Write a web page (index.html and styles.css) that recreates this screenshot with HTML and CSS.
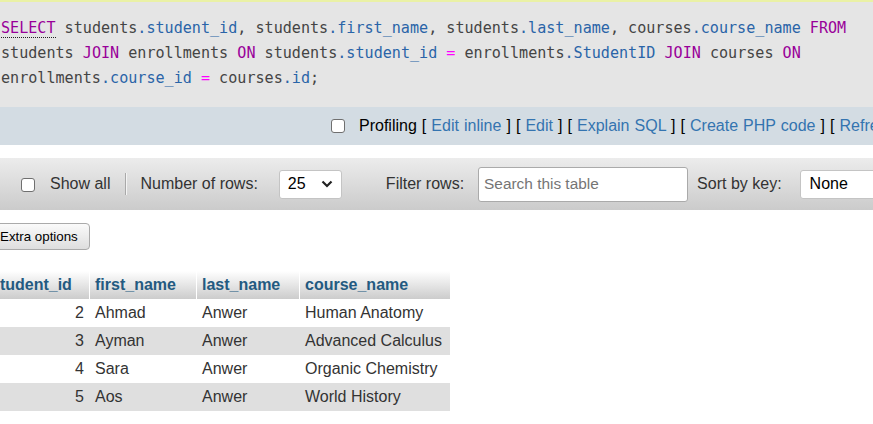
FILE: index.html
```html
<!DOCTYPE html>
<html lang="en">
<head>
<meta charset="utf-8">
<title>SQL result</title>
<link rel="stylesheet" href="styles.css">
</head>
<body>
<div class="page">
  <div class="topline"></div>
  <div class="sql"><span class="kw doc">SELECT</span> students<span class="v2">.student_id</span>, students<span class="v2">.first_name</span>, students<span class="v2">.last_name</span>, courses<span class="v2">.course_name</span> <span class="kw">FROM</span><br>students <span class="kw">JOIN</span> enrollments <span class="kw">ON</span> students<span class="v2">.student_id</span> <span class="op">=</span> enrollments<span class="v2">.StudentID</span> <span class="kw">JOIN</span> courses <span class="kw">ON</span><br>enrollments<span class="v2">.course_id</span> <span class="op">=</span> courses<span class="v2">.id</span>;</div>

  <div class="profiling">
    <span class="cb"></span>
    <span class="ptext">Profiling <span class="br">[</span> <a href="#">Edit inline</a> <span class="br">]</span> <span class="br">[</span> <a href="#">Edit</a> <span class="br">]</span> <span class="br">[</span> <a href="#">Explain SQL</a> <span class="br">]</span> <span class="br">[</span> <a href="#">Create PHP code</a> <span class="br">]</span> <span class="br">[</span> <a href="#">Refresh</a> <span class="br">]</span></span>
  </div>

  <div class="toolbar">
    <span class="cb"></span>
    <span class="lbl showall">Show all</span>
    <span class="sep"></span>
    <span class="lbl nrows">Number of rows:</span>
    <span class="sel rows"><span>25</span><svg class="chev" width="12" height="8" viewBox="0 0 12 8"><polyline points="1.5,1.5 6,6 10.5,1.5" fill="none" stroke="#222" stroke-width="2.2"/></svg></span>
    <span class="lbl filter">Filter rows:</span>
    <span class="search">Search this table</span>
    <span class="lbl sortby">Sort by key:</span>
    <span class="sel sortsel"><span>None</span></span>
  </div>

  <div class="extra"><span class="btn">Extra options</span></div>

  <table class="data">
    <thead>
      <tr><th class="c1">student_id</th><th class="c2">first_name</th><th class="c3">last_name</th><th class="c4">course_name</th></tr>
    </thead>
    <tbody>
      <tr><td class="num">2</td><td>Ahmad</td><td>Anwer</td><td>Human Anatomy</td></tr>
      <tr><td class="num">3</td><td>Ayman</td><td>Anwer</td><td>Advanced Calculus</td></tr>
      <tr><td class="num">4</td><td>Sara</td><td>Anwer</td><td>Organic Chemistry</td></tr>
      <tr><td class="num">5</td><td>Aos</td><td>Anwer</td><td>World History</td></tr>
    </tbody>
  </table>
</div>
</body>
</html>
```

FILE: styles.css
```css
html, body {
  margin: 0;
  padding: 0;
  overflow: hidden;
  background: #fff;
}
body {
  font-family: "Liberation Sans", Arial, sans-serif;
  color: #333;
}
.page {
  width: 873px;
  overflow: hidden;
}
.topline {
  height: 2px;
  background: #eaf1a6;
}
.sql {
  background: #e5e5e5;
  height: 105px;
  box-sizing: border-box;
  padding: 14px 0 0 1px;
  font-family: "DejaVu Sans Mono", "Liberation Mono", monospace;
  font-size: 15.1px;
  line-height: 25px;
  color: #444;
  white-space: nowrap;
}
.kw { color: #990099; }
.v2 { color: #2a64a8; }
.op { color: #ff00ff; }
.doc { border-bottom: 1px dotted #222; }

.profiling {
  background: #d3dce3;
  height: 38px;
  display: flex;
  align-items: center;
  padding-left: 331px;
  font-size: 16px;
  white-space: nowrap;
  color: #000;
}
.cb {
  flex: none;
  width: 12px;
  height: 12px;
  border: 1px solid #6f6f6f;
  border-radius: 3px;
  background: #fff;
}
.ptext {
  margin-left: 14px;
  word-spacing: 0.6px;
}
.ptext a {
  color: #3474b0;
  text-decoration: none;
}

.toolbar {
  margin-top: 13px;
  height: 52px;
  background: linear-gradient(#ececec, #cbcbcb);
  display: flex;
  align-items: center;
  padding-left: 21px;
  font-size: 16px;
  white-space: nowrap;
  color: #333;
}
.toolbar .cb { margin-top: 1px; }
.lbl { flex: none; }
.showall { margin-left: 15px; }
.sep {
  flex: none;
  width: 1px;
  height: 22px;
  background: #a9a9a9;
  border-right: 1px solid #f4f4f4;
  margin-left: 15px;
}
.nrows { margin-left: 13px; }
.sel {
  flex: none;
  box-sizing: border-box;
  height: 29px;
  background: #fff;
  border: 1px solid #c4c4c4;
  border-radius: 3px;
  display: flex;
  align-items: center;
  color: #000;
  font-size: 16px;
}
.rows {
  width: 63px;
  margin-left: 21px;
  padding-left: 8px;
}
.chev { margin-left: 15px; }
.filter { margin-left: 44px; }
.search {
  flex: none;
  box-sizing: border-box;
  width: 210px;
  height: 35px;
  margin-left: 14px;
  background: #fff;
  border: 1px solid #aaa;
  border-radius: 3px;
  padding-left: 5px;
  display: flex;
  align-items: center;
  color: #757575;
  font-size: 15.4px;
}
.sortby { margin-left: 9px; }
.sortsel {
  width: 120px;
  margin-left: 18px;
  padding-left: 9px;
}

.extra {
  margin-top: 13px;
  height: 27px;
}
.btn {
  box-sizing: border-box;
  display: inline-flex;
  align-items: center;
  height: 27px;
  margin-left: -14px;
  padding: 0 11px 0 13px;
  border: 1px solid #aaa;
  border-radius: 4px;
  background: linear-gradient(#fafafa, #dedede);
  font-size: 13.33px;
  color: #000;
}

.data {
  margin-top: 21px;
  margin-left: -14px;
  border-collapse: separate;
  border-spacing: 0;
  table-layout: fixed;
  font-size: 16px;
  color: #333;
}
.data th {
  height: 28px;
  padding: 0 5px;
  box-sizing: border-box;
  text-align: left;
  font-size: 16px;
  font-weight: bold;
  color: #235a81;
  background: linear-gradient(#ffffff, #cccccc);
  border-right: 1px solid #fff;
  white-space: nowrap;
}
.data th.c4 { border-right: 0; }
.data th.c1 { width: 104px; }
.data th.c2 { width: 107px; }
.data th.c3 { width: 103px; }
.data th.c4 { width: 150px; }
.data td {
  height: 28px;
  padding: 0 5px;
  border-right: 1px solid transparent;
  white-space: nowrap;
}
.data td:last-child { border-right: 0; }
.data td.num { text-align: right; }
.data tbody tr:nth-child(even) td { background: #dfdfdf; }
```
